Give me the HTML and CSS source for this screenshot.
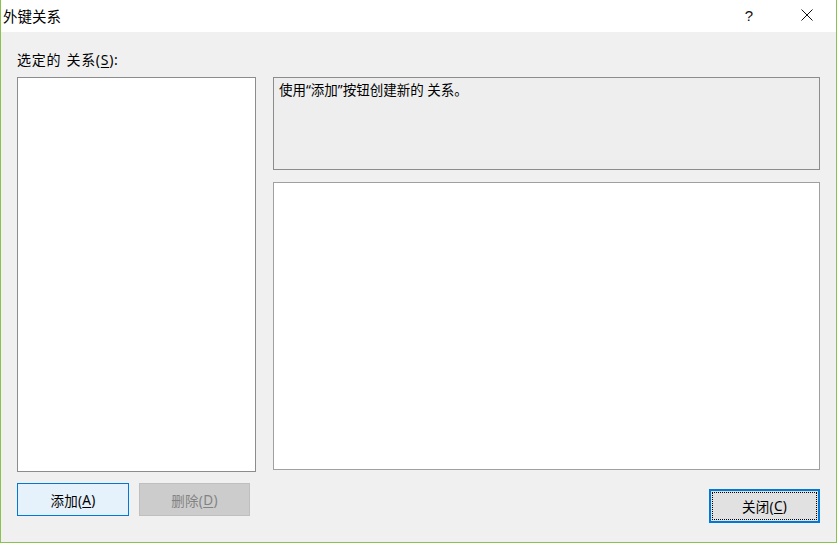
FILE: index.html
```html
<!DOCTYPE html>
<html lang="zh-CN">
<head>
<meta charset="utf-8">
<title>外键关系</title>
<link rel="stylesheet" href="styles.css">
</head>
<body>
<div class="window">
  <div class="titlebar">
    <div class="title">外键关系</div>
    <div class="controls">
      <div class="ctrl help">?</div>
      <div class="ctrl close">
        <svg width="12" height="12" viewBox="0 0 12 12"><path d="M0.5 0.5 L11.5 11.5 M11.5 0.5 L0.5 11.5" stroke="#111" stroke-width="1" fill="none"/></svg>
      </div>
    </div>
  </div>
  <div class="content">
    <div class="label">选定的 关系(<u>S</u>):</div>
    <div class="main">
      <div class="list"></div>
      <div class="right">
        <div class="desc">使用“添加”按钮创建新的 关系。</div>
        <div class="grid"></div>
      </div>
    </div>
    <div class="buttons">
      <div class="leftbtns">
        <div class="btn add">添加(<u>A</u>)</div>
        <div class="btn del">删除(<u>D</u>)</div>
      </div>
      <div class="btn closebtn"><span class="focus">关闭(<u>C</u>)</span></div>
    </div>
  </div>
</div>
</body>
</html>
```
FILE: styles.css
```css
* { box-sizing: border-box; }
html, body { margin: 0; padding: 0; }
body {
  font-family: "Noto Sans", "Noto Sans CJK SC", sans-serif;
  font-size: 13.5px;
  color: #000;
  background: #f0f0f0;
}
u { text-underline-offset: 2px; }
.window {
  width: 837px;
  height: 543px;
  border-left: 1px solid #8cc152;
  border-right: 1px solid #8cc152;
  border-bottom: 1px solid #8cc152;
  background: #f0f0f0;
  display: flex;
  flex-direction: column;
}
.titlebar {
  height: 32px;
  background: #fff;
  display: flex;
  align-items: center;
  justify-content: space-between;
  padding-left: 2px;
}
.title {
  font-size: 14.5px;
  line-height: 20px;
  margin-top: -1px;
}
.controls {
  display: flex;
  height: 100%;
}
.ctrl {
  width: 58px;
  height: 100%;
  display: flex;
  align-items: center;
  justify-content: center;
}
.help {
  font-family: "Liberation Sans", sans-serif;
  font-size: 15px;
  color: #111;
  margin-top: -1px;
}
.close svg { display: block; margin-top: -2px; }
.content {
  flex: 1;
  padding: 19px 16px 0 16px;
  display: flex;
  flex-direction: column;
}
.label {
  font-size: 14px;
  line-height: 18px;
  height: 18px;
  margin-bottom: 8px;
  letter-spacing: 0.7px;
  word-spacing: 1px;
}
.main {
  display: flex;
  align-items: flex-start;
  gap: 17px;
}
.list {
  width: 239px;
  height: 395px;
  background: #fff;
  border: 1px solid #8c8c8c;
}
.right {
  width: 547px;
  display: flex;
  flex-direction: column;
  gap: 12px;
}
.desc {
  height: 93px;
  background: #eeeeee;
  border: 1px solid #8c8c8c;
  padding: 2px 5px;
  line-height: 20px;
}
.grid {
  height: 288px;
  background: #fff;
  border: 1px solid #a0a0a0;
}
.buttons {
  display: flex;
  justify-content: space-between;
  align-items: flex-start;
  margin-top: 11px;
}
.leftbtns {
  display: flex;
  gap: 10px;
}
.btn {
  width: 112px;
  height: 33px;
  display: flex;
  align-items: center;
  justify-content: center;
  border: 1px solid #adadad;
  background: #e1e1e1;
  letter-spacing: 0.3px;
}
.add {
  background: #e5f1fb;
  border-color: #0078d7;
}
.del {
  width: 111px;
  background: #cccccc;
  border-color: #bfbfbf;
  color: #838383;
}
.closebtn {
  width: 111px;
  height: 34px;
  margin-top: 6px;
  border: 2px solid #0078d7;
  padding: 1px;
}
.focus {
  width: 100%;
  height: 100%;
  display: flex;
  align-items: center;
  justify-content: center;
  outline: 1px dotted #000;
  outline-offset: -1px;
}
```
